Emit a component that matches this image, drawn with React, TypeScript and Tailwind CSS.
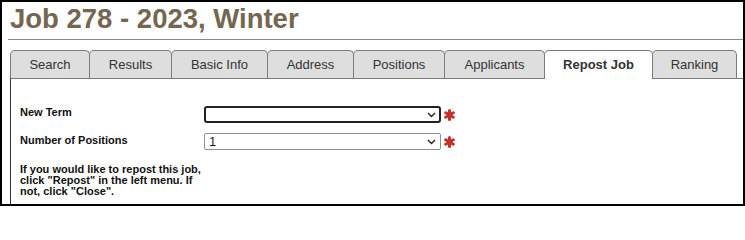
const tabs = [
  { label: "Search", width: "w-[80px]" },
  { label: "Results", width: "w-[83px]" },
  { label: "Basic Info", width: "w-[97px]" },
  { label: "Address", width: "w-[87px]" },
  { label: "Positions", width: "w-[92px]" },
  { label: "Applicants", width: "w-[101px]" },
  { label: "Repost Job", width: "w-[109px]", active: true },
  { label: "Ranking", width: "w-[85px]" },
];

const Chevron = () => (
  <svg width="9" height="6" viewBox="0 0 9 6" className="shrink-0">
    <path d="M1 1 L4.5 4.5 L8 1" fill="none" stroke="#222" strokeWidth="1.4" />
  </svg>
);

const Required = () => (
  <svg width="11" height="12" viewBox="0 0 11 12" className="ml-[3px] shrink-0">
    <g stroke="#c4312b" strokeWidth="3" strokeLinecap="round">
      <line x1="5.5" y1="1.6" x2="5.5" y2="10.4" />
      <line x1="1.7" y1="3.8" x2="9.3" y2="8.2" />
      <line x1="1.7" y1="8.2" x2="9.3" y2="3.8" />
    </g>
  </svg>
);

const App = () => {
  return (
    <div className="w-[745px] h-[206px] overflow-hidden border-2 border-black bg-white font-['Liberation_Sans',Arial,sans-serif]">
      {/* Page title */}
      <div className="ml-[6px] pl-[2px] pt-[3px] pb-[7px] border-b border-[#8c8a7e]">
        <h1 className="text-[27.5px] leading-[27px] font-bold text-[#74664f]">Job 278 - 2023, Winter</h1>
      </div>

      {/* Tabs */}
      <div className="mt-[10px] ml-[8px] flex items-end h-[28px]">
        {tabs.map((tab, i) => (
          <div
            key={tab.label}
            className={
              "flex items-center justify-center rounded-t-[5px] border border-b-0 border-[#7c7c7c] text-[13px] text-[#333] " +
              tab.width +
              (i > 0 ? " -ml-px" : "") +
              (tab.active
                ? " relative z-10 h-[29px] -mb-px bg-white font-bold text-[#222] pb-px"
                : " h-[28px] bg-[#dedede]")
            }
          >
            {tab.label}
          </div>
        ))}
      </div>

      {/* Panel */}
      <div className="ml-[8px] h-[130px] border-t border-l border-t-[#7c7c7c] border-l-[#333] pl-[9px] pt-[27px]">
        <div className="flex flex-col gap-[10px]">
          <div className="flex items-start">
            <div className="w-[184px] text-[11px] leading-[13px] font-bold text-[#111]">New Term</div>
            <div className="flex items-center">
              <div className="w-[237px] h-[17px] border-2 border-[#222] rounded-[3px] flex items-center justify-end pr-[3px]">
                <Chevron />
              </div>
              <Required />
            </div>
          </div>
          <div className="flex items-start">
            <div className="w-[184px] pt-px text-[11px] leading-[13px] font-bold text-[#111]">Number of Positions</div>
            <div className="flex items-center">
              <div className="w-[237px] h-[17px] border border-[#8f8f8f] rounded-[2px] flex items-center justify-between pl-[4px] pr-[4px]">
                <span className="text-[13px] leading-none text-[#222]">1</span>
                <Chevron />
              </div>
              <Required />
            </div>
          </div>
        </div>
        <p className="mt-[14px] w-[188px] text-[11px] leading-[11px] font-bold text-[#111]">
          If you would like to repost this job, click "Repost" in the left menu. If not, click "Close".
        </p>
      </div>
    </div>
  );
};

export default App;
